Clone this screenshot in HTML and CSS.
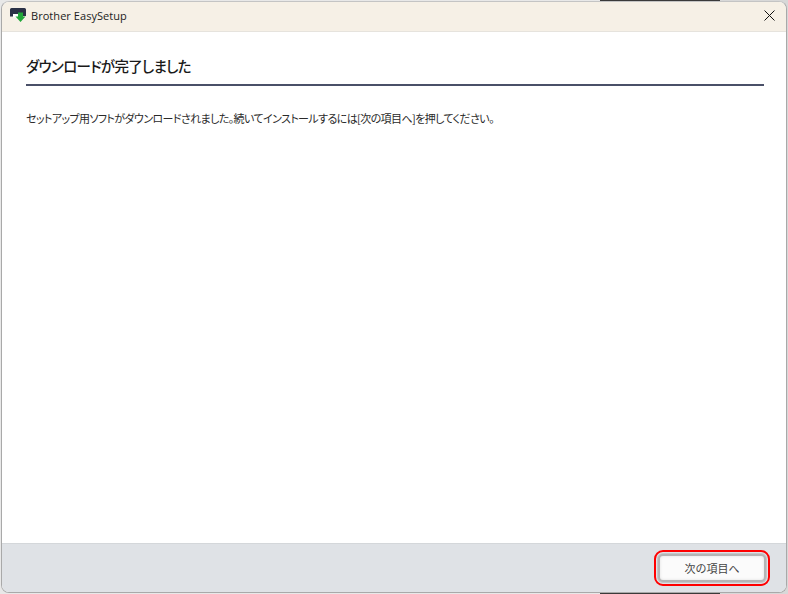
FILE: index.html
```html
<!DOCTYPE html>
<html lang="ja">
<head>
<meta charset="utf-8">
<title>Brother EasySetup</title>
<link rel="stylesheet" href="styles.css">
</head>
<body>
<div class="window">
  <header class="titlebar">
    <svg class="app-icon" width="16" height="14" viewBox="0 0 16 14">
      <path d="M0 1.5Q0 0 1.5 0H14.5Q16 0 16 1.5V8H13V6H3V8.5H0Z" fill="#2b3146"/>
      <rect x="3" y="6" width="6" height="3.5" fill="#fff"/>
      <path d="M8 4.5H13V8.5H15.5L10.5 14L5.5 8.5H8Z" fill="#22a83a"/>
    </svg>
    <span class="app-name">Brother EasySetup</span>
    <svg class="close" width="11" height="11" viewBox="0 0 11 11">
      <path d="M0.5 0.5L10.5 10.5M10.5 0.5L0.5 10.5" stroke="#111" stroke-width="1" fill="none"/>
    </svg>
  </header>
  <main class="content">
    <h1 class="heading">ダウンロードが完了しました</h1>
    <p class="message">セットアップ用ソフトがダウンロードされました。続いてインストールするには[次の項目へ]を押してください。</p>
  </main>
  <footer class="footer">
    <button class="next" type="button">次の項目へ</button>
  </footer>
</div>
</body>
</html>
```
FILE: styles.css
```css
* {
  box-sizing: border-box;
}

html,
body {
  height: 100%;
}

body {
  margin: 0;
  padding: 1px 1px 1px 1px;
  background: linear-gradient(90deg, #e8e8e8 0, #e8e8e8 600px, #3a3a3a 600px, #3a3a3a 720px, #d8d8d8 720px);
  font-family: "Noto Sans CJK JP", "Noto Sans", sans-serif;
  overflow: hidden;
}

.window {
  display: flex;
  flex-direction: column;
  height: 592px;
  background: #fff;
  border: 1px solid #a9a9a9;
  border-top-color: #c4c4c4;
  border-radius: 8px;
  overflow: hidden;
}

.titlebar {
  flex: none;
  height: 30px;
  display: flex;
  align-items: center;
  padding: 0 11px 3px 8px;
  background: #f6f0e6;
  border-bottom: 1px solid #e6e3dd;
}

.app-icon {
  flex: none;
}

.app-name {
  margin-left: 5px;
  font-family: "Open Sans", "Noto Sans", sans-serif;
  font-size: 11px;
  letter-spacing: 0.05px;
  color: #1c1c1c;
  flex: 1;
}

.content {
  flex: 1;
  padding: 0 22px 0 24px;
}

.heading {
  margin: 0;
  height: 54px;
  padding-top: 23px;
  font-size: 14.5px;
  line-height: 22px;
  font-weight: 500;
  color: #1a1a1a;
  letter-spacing: -0.7px;
  font-feature-settings: "palt";
  border-bottom: 2px solid #4a5068;
}

.message {
  margin: 24px 0 0;
  font-size: 11px;
  line-height: 16px;
  color: #2a2a2a;
  letter-spacing: -0.6px;
  font-feature-settings: "palt";
  white-space: nowrap;
}

.footer {
  flex: none;
  height: 49px;
  display: flex;
  align-items: flex-start;
  justify-content: flex-end;
  padding: 10px 20px 0 0;
  background: #dfe2e6;
  border-top: 1px solid #d4d7da;
}

.next {
  width: 108px;
  height: 28px;
  padding: 0;
  font: inherit;
  font-size: 11px;
  color: #444;
  background: #fbfbfb;
  border: 2px solid #b5b5b5;
  border-radius: 5px;
  box-shadow: inset 0 0 3px #e0e0e0, 0 0 0 1px #c4c6c8;
  outline: 2px solid #f00;
  outline-offset: 2px;
}
```
